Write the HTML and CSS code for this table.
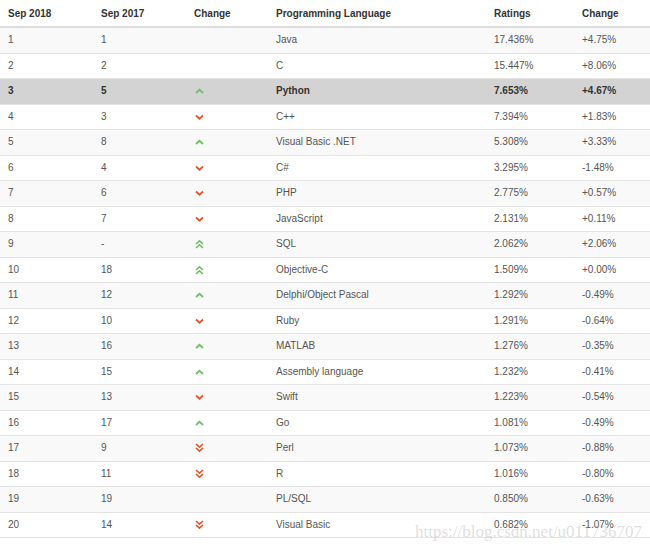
FILE: index.html
```html
<!DOCTYPE html>
<html>
<head>
<meta charset="utf-8">
<link rel="stylesheet" href="styles.css">
</head>
<body>
<svg width="0" height="0" class="defs">
  <defs>
    <symbol id="up1" viewBox="0 0 9 10"><polyline points="1,7 4.5,3.8 8,7" fill="none" stroke="currentColor" stroke-width="1.8"/></symbol>
    <symbol id="dn1" viewBox="0 0 9 10"><polyline points="1,3.5 4.5,6.7 8,3.5" fill="none" stroke="currentColor" stroke-width="1.8"/></symbol>
    <symbol id="up2" viewBox="0 0 9 10"><polyline points="1,5 4.5,1.8 8,5" fill="none" stroke="currentColor" stroke-width="1.6"/><polyline points="1,9 4.5,5.8 8,9" fill="none" stroke="currentColor" stroke-width="1.6"/></symbol>
    <symbol id="dn2" viewBox="0 0 9 10"><polyline points="1,1 4.5,4.2 8,1" fill="none" stroke="currentColor" stroke-width="1.6"/><polyline points="1,5 4.5,8.2 8,5" fill="none" stroke="currentColor" stroke-width="1.6"/></symbol>
  </defs>
</svg>
<table class="rank">
  <colgroup>
    <col class="c1"><col class="c2"><col class="c3"><col class="c4"><col class="c5"><col class="c6">
  </colgroup>
  <thead>
    <tr><th>Sep 2018</th><th>Sep 2017</th><th>Change</th><th>Programming Language</th><th>Ratings</th><th>Change</th></tr>
  </thead>
  <tbody>
    <tr><td>1</td><td>1</td><td></td><td>Java</td><td>17.436%</td><td>+4.75%</td></tr>
    <tr><td>2</td><td>2</td><td></td><td>C</td><td>15.447%</td><td>+8.06%</td></tr>
    <tr class="hl"><td>3</td><td>5</td><td><svg class="ic up"><use href="#up1"/></svg></td><td>Python</td><td>7.653%</td><td>+4.67%</td></tr>
    <tr><td>4</td><td>3</td><td><svg class="ic dn"><use href="#dn1"/></svg></td><td>C++</td><td>7.394%</td><td>+1.83%</td></tr>
    <tr><td>5</td><td>8</td><td><svg class="ic up"><use href="#up1"/></svg></td><td>Visual Basic .NET</td><td>5.308%</td><td>+3.33%</td></tr>
    <tr><td>6</td><td>4</td><td><svg class="ic dn"><use href="#dn1"/></svg></td><td>C#</td><td>3.295%</td><td>-1.48%</td></tr>
    <tr><td>7</td><td>6</td><td><svg class="ic dn"><use href="#dn1"/></svg></td><td>PHP</td><td>2.775%</td><td>+0.57%</td></tr>
    <tr><td>8</td><td>7</td><td><svg class="ic dn"><use href="#dn1"/></svg></td><td>JavaScript</td><td>2.131%</td><td>+0.11%</td></tr>
    <tr><td>9</td><td>-</td><td><svg class="ic up"><use href="#up2"/></svg></td><td>SQL</td><td>2.062%</td><td>+2.06%</td></tr>
    <tr><td>10</td><td>18</td><td><svg class="ic up"><use href="#up2"/></svg></td><td>Objective-C</td><td>1.509%</td><td>+0.00%</td></tr>
    <tr><td>11</td><td>12</td><td><svg class="ic up"><use href="#up1"/></svg></td><td>Delphi/Object Pascal</td><td>1.292%</td><td>-0.49%</td></tr>
    <tr><td>12</td><td>10</td><td><svg class="ic dn"><use href="#dn1"/></svg></td><td>Ruby</td><td>1.291%</td><td>-0.64%</td></tr>
    <tr><td>13</td><td>16</td><td><svg class="ic up"><use href="#up1"/></svg></td><td>MATLAB</td><td>1.276%</td><td>-0.35%</td></tr>
    <tr><td>14</td><td>15</td><td><svg class="ic up"><use href="#up1"/></svg></td><td>Assembly language</td><td>1.232%</td><td>-0.41%</td></tr>
    <tr><td>15</td><td>13</td><td><svg class="ic dn"><use href="#dn1"/></svg></td><td>Swift</td><td>1.223%</td><td>-0.54%</td></tr>
    <tr><td>16</td><td>17</td><td><svg class="ic up"><use href="#up1"/></svg></td><td>Go</td><td>1.081%</td><td>-0.49%</td></tr>
    <tr><td>17</td><td>9</td><td><svg class="ic dn"><use href="#dn2"/></svg></td><td>Perl</td><td>1.073%</td><td>-0.88%</td></tr>
    <tr><td>18</td><td>11</td><td><svg class="ic dn"><use href="#dn2"/></svg></td><td>R</td><td>1.016%</td><td>-0.80%</td></tr>
    <tr><td>19</td><td>19</td><td></td><td>PL/SQL</td><td>0.850%</td><td>-0.63%</td></tr>
    <tr><td>20</td><td>14</td><td><svg class="ic dn"><use href="#dn2"/></svg></td><td>Visual Basic</td><td>0.682%</td><td>-1.07%</td></tr>
  </tbody>
</table>
<div class="watermark">https://blog.csdn.net/u011736707</div>
</body>
</html>
```
FILE: styles.css
```css
html, body {
  margin: 0;
  padding: 0;
  background: #fff;
}
body {
  width: 650px;
  height: 546px;
  overflow: hidden;
  position: relative;
  font-family: "Liberation Sans", Arial, sans-serif;
  font-size: 10px;
  color: #555;
}
.defs {
  position: absolute;
  width: 0;
  height: 0;
}
.rank {
  width: 650px;
  border-collapse: collapse;
  table-layout: fixed;
}
.c1 { width: 93px; }
.c2 { width: 93px; }
.c3 { width: 82px; }
.c4 { width: 218px; }
.c5 { width: 88px; }
.c6 { width: 76px; }
.rank th {
  text-align: left;
  font-weight: bold;
  color: #333;
  height: 26px;
  padding: 0 8px;
  border-bottom: 2px solid #ddd;
  vertical-align: middle;
}
.rank td {
  height: 24.5px;
  padding: 0 8px;
  border-bottom: 1px solid #e4e4e4;
  vertical-align: middle;
  line-height: 12px;
}
.rank tbody tr:nth-child(odd) td {
  background: #f9f9f9;
}
.rank tbody tr.hl td {
  background: #d3d3d3;
  color: #333;
  font-weight: bold;
}
.ic {
  display: block;
  width: 9px;
  height: 10px;
  margin-left: 1px;
}
.up { color: #6fbf66; }
.dn { color: #e8522a; }
.watermark {
  position: absolute;
  left: 415px;
  top: 523px;
  font-family: "Liberation Serif", "Times New Roman", serif;
  font-size: 17px;
  line-height: 1;
  color: rgba(150, 150, 150, 0.33);
  white-space: nowrap;
  pointer-events: none;
}
```
